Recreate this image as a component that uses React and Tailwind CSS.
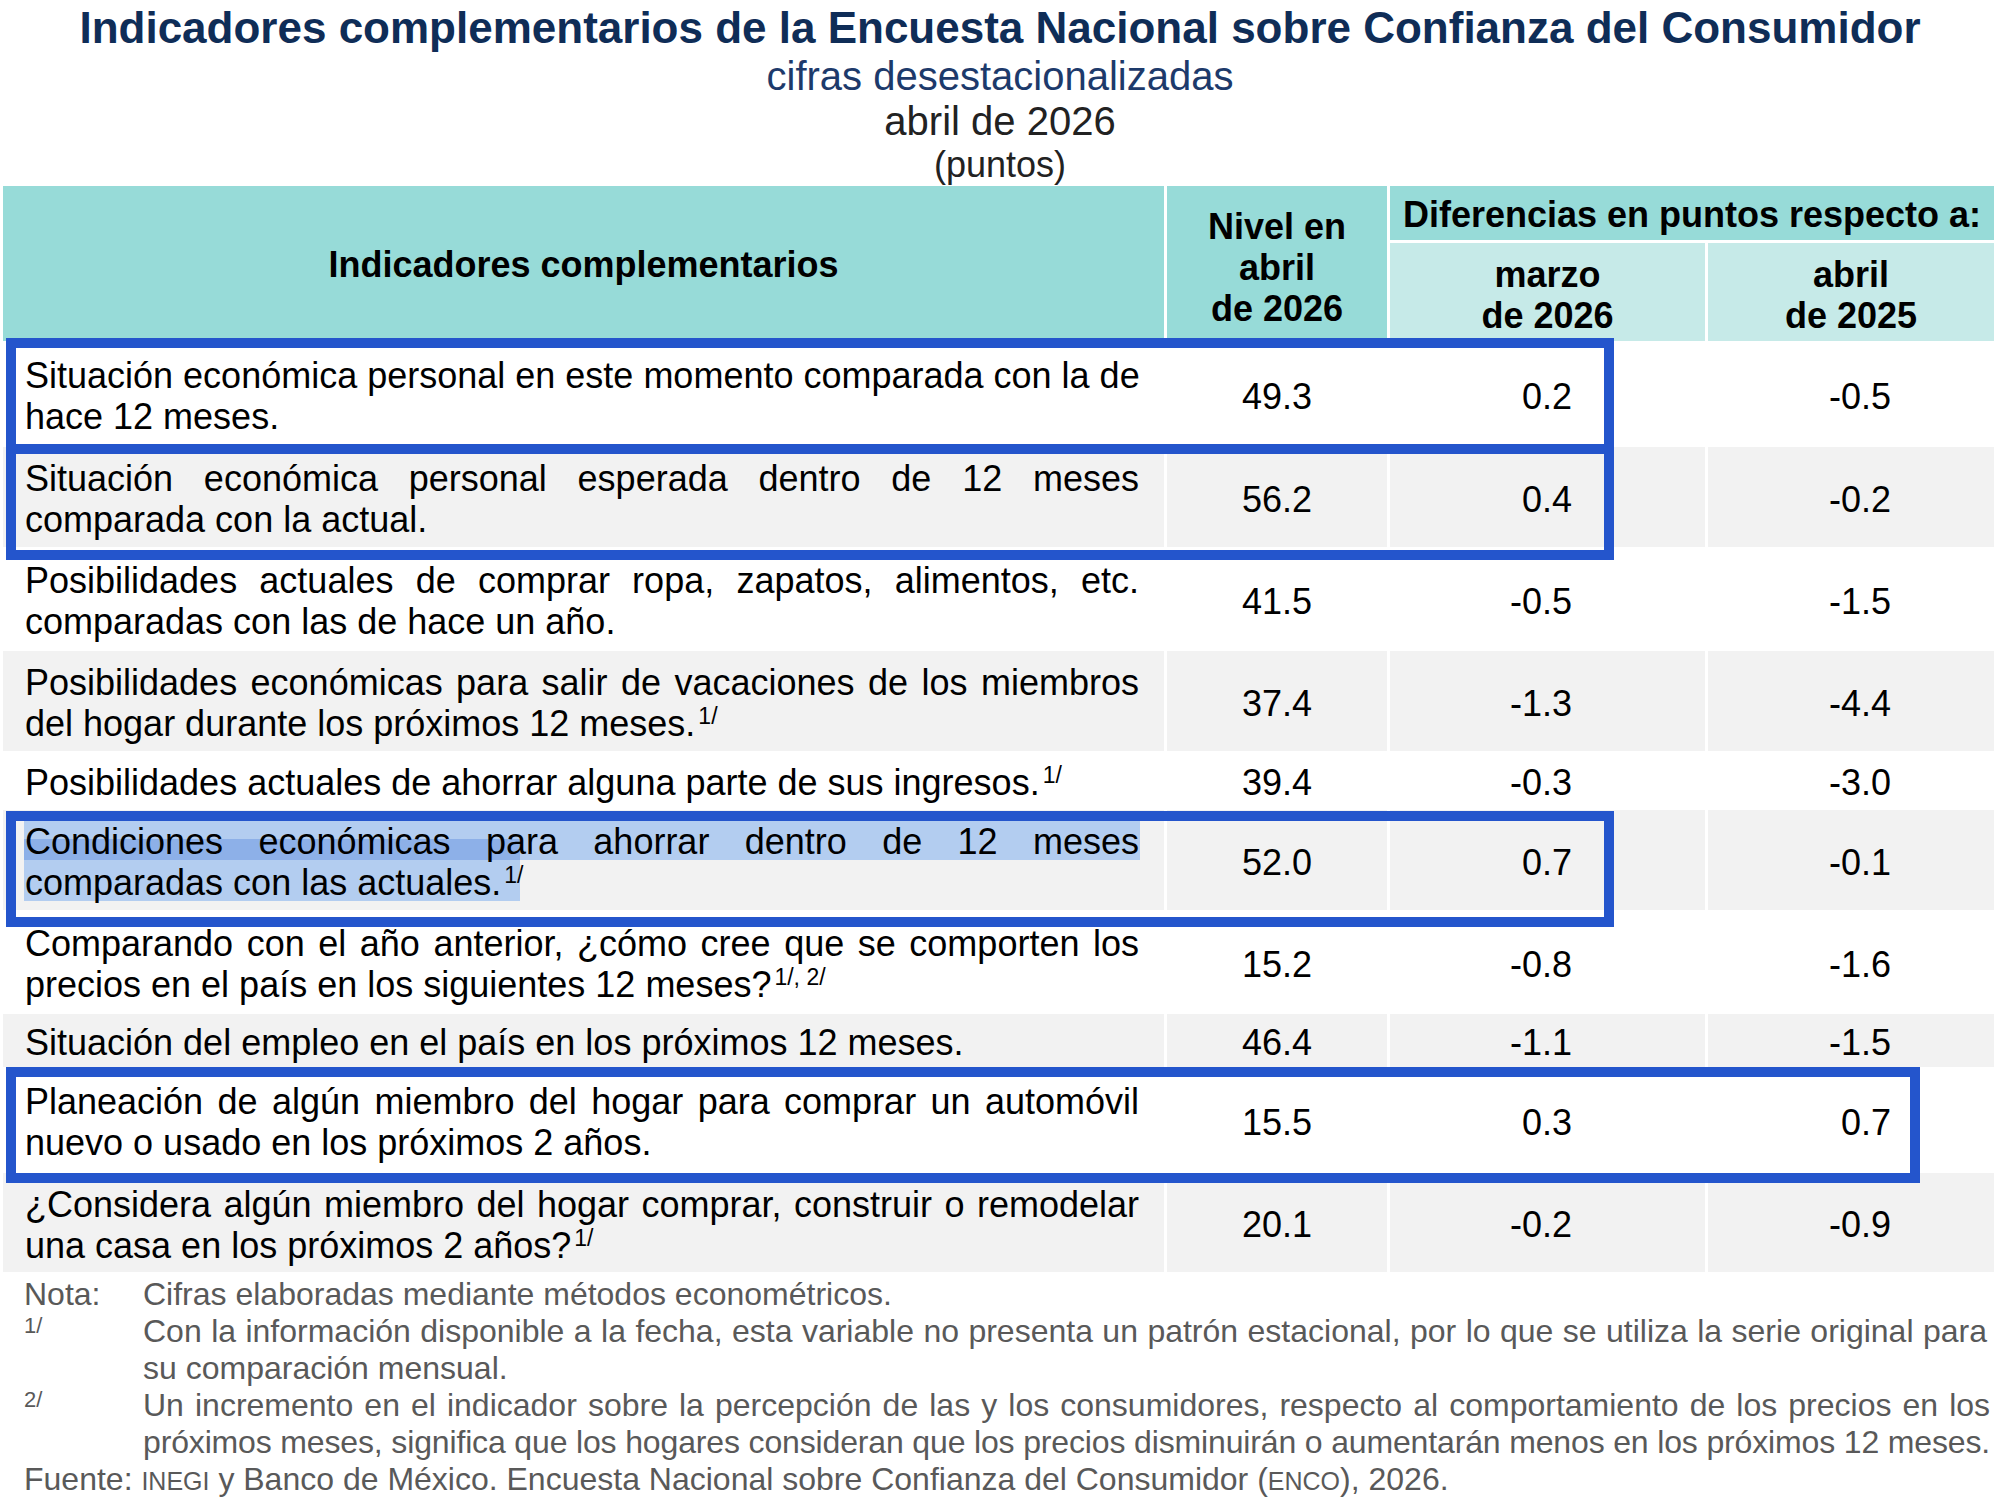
import React from 'react';

const rows = [
  {
    lines: ['Situación económica personal en este momento comparada con la de', 'hace 12 meses.'],
    h: 'h-[106px]',
    bg: 'bg-white',
    vals: ['49.3', '0.2', '-0.5'],
  },
  {
    lines: ['Situación económica personal esperada dentro de 12 meses', 'comparada con la actual.'],
    h: 'h-[100px]',
    bg: 'bg-[#f2f2f2]',
    vals: ['56.2', '0.4', '-0.2'],
  },
  {
    lines: ['Posibilidades actuales de comprar ropa, zapatos, alimentos, etc.', 'comparadas con las de hace un año.'],
    h: 'h-[104px]',
    bg: 'bg-white',
    vals: ['41.5', '-0.5', '-1.5'],
  },
  {
    lines: ['Posibilidades económicas para salir de vacaciones de los miembros', 'del hogar durante los próximos 12 meses.'],
    sup: '1/',
    h: 'h-[100px]',
    bg: 'bg-[#f2f2f2]',
    vals: ['37.4', '-1.3', '-4.4'],
  },
  {
    lines: ['Posibilidades actuales de ahorrar alguna parte de sus ingresos.'],
    sup: '1/',
    h: 'h-[59px]',
    bg: 'bg-white',
    vals: ['39.4', '-0.3', '-3.0'],
  },
  {
    lines: ['Condiciones económicas para ahorrar dentro de 12 meses', 'comparadas con las actuales.'],
    sup: '1/',
    h: 'h-[100px]',
    bg: 'bg-[#f2f2f2]',
    vals: ['52.0', '0.7', '-0.1'],
    selected: true,
  },
  {
    lines: ['Comparando con el año anterior, ¿cómo cree que se comporten los', 'precios en el país en los siguientes 12 meses?'],
    sup: '1/, 2/',
    h: 'h-[104px]',
    bg: 'bg-white',
    vals: ['15.2', '-0.8', '-1.6'],
  },
  {
    lines: ['Situación del empleo en el país en los próximos 12 meses.'],
    h: 'h-[53px]',
    bg: 'bg-[#f2f2f2]',
    vals: ['46.4', '-1.1', '-1.5'],
  },
  {
    lines: ['Planeación de algún miembro del hogar para comprar un automóvil', 'nuevo o usado en los próximos 2 años.'],
    h: 'h-[106px]',
    bg: 'bg-white',
    vals: ['15.5', '0.3', '0.7'],
  },
  {
    lines: ['¿Considera algún miembro del hogar comprar, construir o remodelar', 'una casa en los próximos 2 años?'],
    sup: '1/',
    h: 'h-[99px]',
    bg: 'bg-[#f2f2f2]',
    vals: ['20.1', '-0.2', '-0.9'],
  },
];

// outlines drawn over the table
const boxes = [
  'left-[6px] top-[338px] w-[1608px]',
  'left-[6px] top-[444px] w-[1608px]',
  'left-[6px] top-[811px] w-[1608px]',
  'left-[6px] top-[1067px] w-[1914px]',
];

const Sup = ({ children }) => (
  <sup className="ml-[3px] text-[23px] top-[-12px]">{children}</sup>
);

const Row = ({ row }) => {
  const last = row.lines.length - 1;
  return (
    <div className={`flex ${row.h} ${row.bg} text-[36px] leading-[41px] text-black`}>
      <div className="relative flex w-[1164px] flex-col justify-center border-r-[3px] border-white pl-[22px] pr-[25px] pt-[4px]">
        {row.selected && (
          <>
            <div className="absolute left-[21px] top-[11px] h-[39px] w-[1116px] bg-[#b3cdf0]" />
            <div className="absolute left-[21px] top-[29px] h-[62px] w-[496px] bg-[#b3cdf0]" />
            <div className="absolute left-[21px] top-[29px] h-[21px] w-[496px] bg-[#8db0e8]" />
          </>
        )}
        {row.lines.map((line, i) => (
          <div
            key={i}
            className={`relative whitespace-nowrap ${i < last ? 'text-justify [text-align-last:justify]' : ''}`}
          >
            {line}
            {i === last && row.sup && <Sup>{row.sup}</Sup>}
          </div>
        ))}
      </div>
      <div className="flex w-[223px] items-center justify-center border-r-[3px] border-white pt-[4px]">
        {row.vals[0]}
      </div>
      <div className="flex w-[318px] items-center justify-end border-r-[3px] border-white pr-[133px] pt-[4px]">
        {row.vals[1]}
      </div>
      <div className="flex flex-1 items-center justify-end pr-[103px] pt-[4px]">{row.vals[2]}</div>
    </div>
  );
};

export default function App() {
  return (
    <div className="relative h-[1506px] w-[2000px] overflow-hidden bg-white font-['Liberation_Sans',Arial,sans-serif]">
      <div className="pt-[3px] text-center">
        <h1 className="text-[44px] font-bold leading-[50px] text-[#0f2d57]">
          Indicadores complementarios de la Encuesta Nacional sobre Confianza del Consumidor
        </h1>
        <div className="text-[40px] leading-[46px] text-[#1d3a6b]">cifras desestacionalizadas</div>
        <div className="text-[40px] leading-[44px] text-[#222222]">abril de 2026</div>
        <div className="mt-[1px] text-[36px] leading-[42px] text-[#222222]">(puntos)</div>
      </div>

      <div className="ml-[3px] w-[1991px]">
        <div className="flex h-[155px] text-[36px] font-bold leading-[41px] text-black">
          <div className="flex w-[1164px] items-center justify-center border-r-[3px] border-white bg-[#97dbd8] pt-[2px]">
            Indicadores complementarios
          </div>
          <div className="flex w-[223px] flex-col items-center justify-center border-r-[3px] border-white bg-[#97dbd8] pt-[7px] text-center">
            <span>Nivel en</span>
            <span>abril</span>
            <span>de 2026</span>
          </div>
          <div className="flex flex-1 flex-col">
            <div className="flex h-[57px] items-center justify-center border-b-[3px] border-white bg-[#97dbd8] pt-[2px]">
              Diferencias en puntos respecto a:
            </div>
            <div className="flex flex-1 bg-[#c6eae8]">
              <div className="flex w-[318px] flex-col items-center justify-center border-r-[3px] border-white pt-[6px] text-center">
                <span>marzo</span>
                <span>de 2026</span>
              </div>
              <div className="flex flex-1 flex-col items-center justify-center pt-[6px] text-center">
                <span>abril</span>
                <span>de 2025</span>
              </div>
            </div>
          </div>
        </div>

        {rows.map((row, i) => (
          <Row key={i} row={row} />
        ))}
      </div>

      <div className="mt-[4px] pl-[24px] pr-[13px] text-[32px] leading-[37px] text-[#595959]">
        <div className="flex">
          <span className="w-[119px] shrink-0">Nota:</span>
          <span>Cifras elaboradas mediante métodos econométricos.</span>
        </div>
        <div className="flex">
          <span className="w-[119px] shrink-0 text-[22px] leading-[26px]">1/</span>
          <div className="flex-1">
            <div className="whitespace-nowrap text-justify [text-align-last:justify]">
              Con la información disponible a la fecha, esta variable no presenta un patrón estacional, por lo que se utiliza la serie original para
            </div>
            <div>su comparación mensual.</div>
          </div>
        </div>
        <div className="flex">
          <span className="w-[119px] shrink-0 text-[22px] leading-[26px]">2/</span>
          <div className="flex-1">
            <div className="whitespace-nowrap text-justify [text-align-last:justify]">
              Un incremento en el indicador sobre la percepción de las y los consumidores, respecto al comportamiento de los precios en los
            </div>
            <div className="whitespace-nowrap tracking-[-0.15px]">
              próximos meses, significa que los hogares consideran que los precios disminuirán o aumentarán menos en los próximos 12 meses.
            </div>
          </div>
        </div>
        <div>
          Fuente: <span className="text-[25px]">INEGI</span> y Banco de México. Encuesta Nacional sobre Confianza del
          Consumidor (<span className="text-[25px]">ENCO</span>), 2026.
        </div>
      </div>

      {boxes.map((pos, i) => (
        <div key={i} className={`pointer-events-none absolute h-[116px] border-[10px] border-[#2455cc] ${pos}`} />
      ))}
    </div>
  );
}
